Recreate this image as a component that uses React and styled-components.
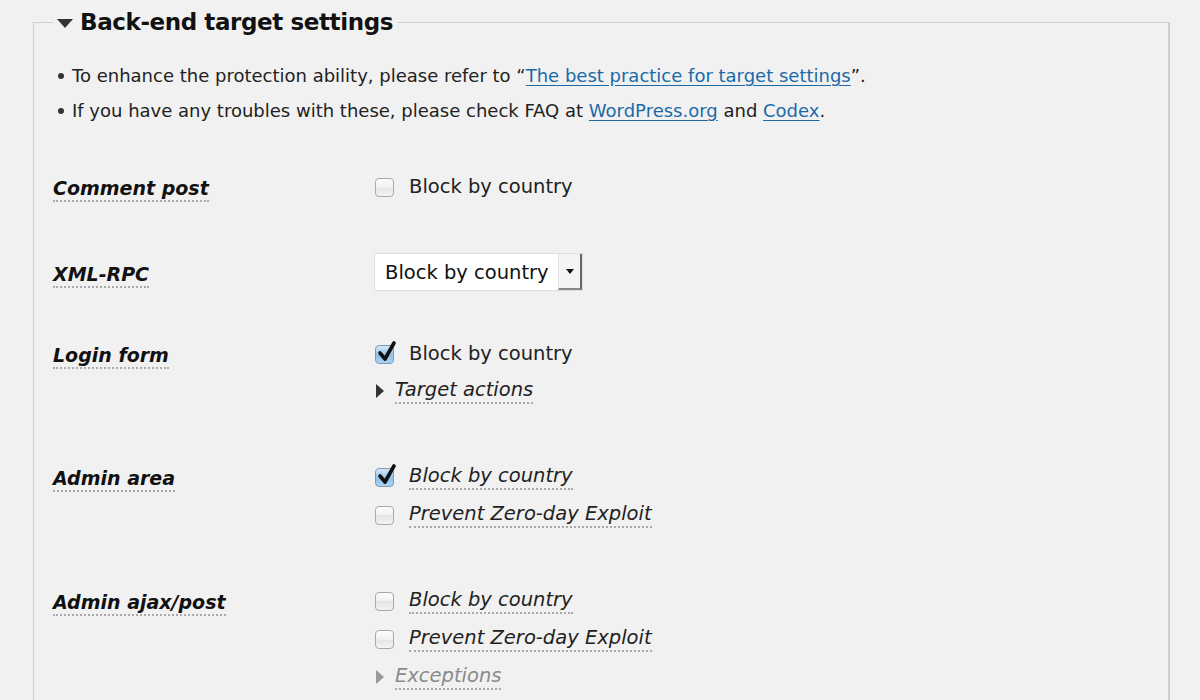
import React from "react";
import styled, { createGlobalStyle } from "styled-components";

const GlobalStyle = createGlobalStyle`
  html, body {
    margin: 0;
    padding: 0;
    background: #f1f1f1;
    overflow: hidden;
  }
  body {
    font-family: "DejaVu Sans", "Liberation Sans", sans-serif;
    color: #222;
  }
`;

const Page = styled.div`
  width: 1200px;
  height: 700px;
  padding: 0 30px 0 33px;
  box-sizing: border-box;
`;

const Fieldset = styled.fieldset`
  margin: 0;
  border: 1px solid #cfcfcf;
  border-right-width: 2px;
  padding: 0 20px 40px 19px;
  min-height: 760px;
  box-sizing: border-box;
`;

const Legend = styled.legend`
  display: flex;
  align-items: center;
  gap: 7px;
  padding: 0 4px;
  margin-left: 0;
  font-size: 23px;
  letter-spacing: -0.4px;
  font-weight: bold;
  color: #111;
  line-height: 44px;
`;

const DownArrow = styled.span`
  width: 0;
  height: 0;
  border-left: 8px solid transparent;
  border-right: 8px solid transparent;
  border-top: 9px solid #333;
  margin-top: 2px;
`;

const Notes = styled.ul`
  list-style: none;
  margin: 14px 0 0;
  padding: 0;
  font-size: 18px;
`;

const Note = styled.li`
  position: relative;
  padding-left: 19px;
  line-height: 35px;
  &::before {
    content: "";
    position: absolute;
    left: 5px;
    top: 15px;
    width: 6px;
    height: 6px;
    border-radius: 50%;
    background: #333;
  }
`;

const Link = styled.a`
  color: #1a6aa8;
  text-decoration: underline;
  text-underline-offset: 3px;
`;

const Rows = styled.div`
  display: flex;
  flex-direction: column;
  gap: 56px;
  margin-top: 44px;
`;

const Row = styled.div`
  display: grid;
  grid-template-columns: 321px 1fr;
  align-items: start;
  margin-bottom: ${(p) => p.$pull || 0}px;
`;

const Label = styled.span`
  justify-self: start;
  font-size: 19px;
  font-weight: bold;
  font-style: italic;
  color: #111;
  line-height: 24px;
  margin-top: 4px;
  border-bottom: 2px dotted #aaa;
`;

const Controls = styled.div`
  display: flex;
  flex-direction: column;
  gap: ${(p) => p.$gap || 8}px;
`;

const Option = styled.label`
  display: flex;
  align-items: center;
  gap: 15px;
  height: 30px;
  font-size: 19.5px;
  color: #222;
`;

const Box = styled.span`
  position: relative;
  width: 17px;
  height: 17px;
  margin-left: 1px;
  border: 1px solid #a9a9a9;
  border-radius: 4px;
  background: ${(p) =>
    p.$checked
      ? "linear-gradient(#d4e8f8, #8fc1ea 55%, #a9d3f3)"
      : "linear-gradient(#fdfdfd, #f0f0f0 50%, #e4e4e4 50%, #f3f3f3)"};
  border-color: ${(p) => (p.$checked ? "#7d9bb8" : "#a9a9a9")};
  flex: none;
`;

const Check = styled.svg`
  position: absolute;
  left: 1px;
  top: -6px;
`;

const Text = styled.span`
  font-style: ${(p) => (p.$italic ? "italic" : "normal")};
  border-bottom: ${(p) => (p.$italic ? "2px dotted #aaa" : "none")};
  line-height: 24px;
`;

const Toggle = styled.div`
  display: flex;
  align-items: center;
  gap: 11px;
  height: 30px;
  font-size: 19.5px;
  font-style: italic;
  color: ${(p) => (p.$muted ? "#8a8a8a" : "#222")};
`;

const RightArrow = styled.span`
  width: 0;
  height: 0;
  border-top: 7px solid transparent;
  border-bottom: 7px solid transparent;
  border-left: 8px solid ${(p) => (p.$muted ? "#999" : "#333")};
  margin-left: 2px;
`;

const ToggleText = styled.span`
  line-height: 24px;
  border-bottom: 2px dotted #aaa;
`;

const Select = styled.div`
  display: flex;
  align-items: stretch;
  width: 209px;
  height: 38px;
  margin: -5px 0 -8px;
  border: 1px solid #dedede;
  background: #fff;
  box-sizing: border-box;
  font-size: 19.5px;
`;

const SelectValue = styled.span`
  flex: 1;
  display: flex;
  align-items: center;
  padding-left: 10px;
  color: #111;
`;

const SelectButton = styled.span`
  width: 21px;
  display: flex;
  align-items: center;
  justify-content: center;
  background: #f4f4f4;
  border-right: 2px solid #666;
  border-bottom: 2px solid #888;
  border-left: 1px solid #e2e2e2;
  &::after {
    content: "";
    border-left: 4px solid transparent;
    border-right: 4px solid transparent;
    border-top: 5px solid #111;
  }
`;

const Checkbox = ({ checked, italic, children }) => (
  <Option>
    <Box $checked={checked}>
      {checked && (
        <Check width="20" height="23" viewBox="0 0 20 23">
          <path
            d="M3 13 L8 19 L17 3"
            fill="none"
            stroke="#111"
            strokeWidth="3.6"
            strokeLinecap="round"
            strokeLinejoin="round"
          />
        </Check>
      )}
    </Box>
    <Text $italic={italic}>{children}</Text>
  </Option>
);

const Expander = ({ muted, children }) => (
  <Toggle $muted={muted}>
    <RightArrow $muted={muted} />
    <ToggleText>{children}</ToggleText>
  </Toggle>
);

export default function App() {
  return (
    <Page>
      <GlobalStyle />
      <Fieldset>
        <Legend>
          <DownArrow />
          Back-end target settings
        </Legend>
        <Notes>
          <Note>
            To enhance the protection ability, please refer to “
            <Link href="#">The best practice for target settings</Link>”.
          </Note>
          <Note>
            If you have any troubles with these, please check FAQ at{" "}
            <Link href="#">WordPress.org</Link> and <Link href="#">Codex</Link>.
          </Note>
        </Notes>
        <Rows>
          <Row>
            <Label>Comment post</Label>
            <Controls>
              <Checkbox>Block by country</Checkbox>
            </Controls>
          </Row>
          <Row $pull={-5}>
            <Label>XML-RPC</Label>
            <Controls>
              <Select>
                <SelectValue>Block by country</SelectValue>
                <SelectButton />
              </Select>
            </Controls>
          </Row>
          <Row>
            <Label>Login form</Label>
            <Controls $gap={7}>
              <Checkbox checked>Block by country</Checkbox>
              <Expander>Target actions</Expander>
            </Controls>
          </Row>
          <Row>
            <Label>Admin area</Label>
            <Controls>
              <Checkbox checked italic>Block by country</Checkbox>
              <Checkbox italic>Prevent Zero-day Exploit</Checkbox>
            </Controls>
          </Row>
          <Row>
            <Label>Admin ajax/post</Label>
            <Controls>
              <Checkbox italic>Block by country</Checkbox>
              <Checkbox italic>Prevent Zero-day Exploit</Checkbox>
              <Expander muted>Exceptions</Expander>
            </Controls>
          </Row>
        </Rows>
      </Fieldset>
    </Page>
  );
}
